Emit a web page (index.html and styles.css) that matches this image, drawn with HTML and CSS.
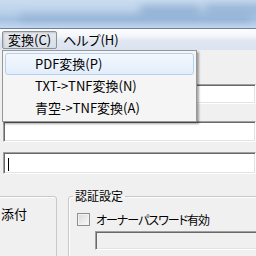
FILE: index.html
```html
<!DOCTYPE html>
<html lang="ja">
<head>
  <meta charset="UTF-8">
  <title>TNF変換</title>
  <link rel="stylesheet" href="styles.css">
</head>
<body>
  <div class="titlebar">
    <div class="blur b1"></div>
    <div class="blur b2"></div>
    <div class="blur b3"></div>
  </div>

  <div class="menubar">
    <span class="menu-item open">変換(C)</span>
    <span class="menu-item">ヘルプ(H)</span>
  </div>

  <div class="dropdown">
    <div class="drop-item active">PDF変換(P)</div>
    <div class="drop-item">TXT-&gt;TNF変換(N)</div>
    <div class="drop-item">青空-&gt;TNF変換(A)</div>
  </div>

  <div class="content">
    <div class="textbox tb1"></div>
    <div class="textbox tb2"></div>
    <div class="textbox tb3"><span class="caret"></span></div>

    <div class="groups">
      <fieldset class="group attach">
        <div class="attach-label">添付</div>
      </fieldset>
      <fieldset class="group auth">
        <legend>認証設定</legend>
        <div class="check-row">
          <span class="checkbox"></span>
          <span class="check-label">オーナーパスワード有効</span>
        </div>
        <div class="textbox disabled"></div>
      </fieldset>
    </div>
  </div>
</body>
</html>
```

FILE: styles.css
```css
body {
  margin: 0;
  width: 256px;
  height: 256px;
  overflow: hidden;
  position: relative;
  background: #f0f0f0;
  font-family: "Noto Sans CJK JP", sans-serif;
  font-feature-settings: "palt";
  font-size: 12px;
  color: #000;
}

.titlebar {
  height: 28px;
  border-bottom: 1px solid #6f8198;
  background: linear-gradient(#cadcef 0%, #bed4eb 35%, #a6c2e1 70%, #c4d8ee 100%);
  position: relative;
  overflow: hidden;
}
.blur {
  position: absolute;
  background: #6f94c2;
  filter: blur(4px);
  opacity: 0.6;
}
.b1 { left: 140px; top: 6px; width: 60px; height: 8px; }
.b2 { left: 205px; top: 4px; width: 60px; height: 10px; opacity: 0.5; }
.b3 { left: 20px; top: 14px; width: 230px; height: 8px; opacity: 0.35; }

.menubar {
  height: 21px;
  display: flex;
  align-items: center;
  padding-left: 2px;
  font-size: 13px;
  background: linear-gradient(#fcfdfe 0%, #f2f5fa 35%, #e1e7f2 55%, #dbe3f1 100%);
}
.menu-item {
  height: 16px;
  line-height: 16px;
  padding: 0 5px;
  border: 1px solid transparent;
  border-radius: 2px;
}
.menu-item.open {
  border-color: #8d9199;
  background: linear-gradient(#e6eaf0, #d8dee7);
  box-shadow: inset 1px 1px 2px rgba(0, 0, 0, 0.15);
}

.dropdown {
  position: absolute;
  left: 2px;
  top: 50px;
  width: 189px;
  padding: 2px;
  border: 1px solid #979797;
  background: #f5f5f5;
  font-size: 13px;
  box-shadow: 2px 2px 2px rgba(0, 0, 0, 0.35);
}
.drop-item {
  height: 20px;
  line-height: 20px;
  padding-left: 29px;
  border: 1px solid transparent;
  border-radius: 3px;
}
.drop-item.active {
  border-color: #b4d0f0;
  background: linear-gradient(#f3f8fe, #e3eefb);
}

.content {
  padding-left: 3px;
}
.textbox {
  box-sizing: border-box;
  background: #fff;
  border: 1px solid;
  border-color: #a0a0a0 #fff #fff #a0a0a0;
  box-shadow: inset 1px 1px #696969, inset -1px -1px #e3e3e3;
}
.tb1 { margin-top: 34px; height: 20px; }
.tb2 { margin-top: 17px; height: 21px; }
.tb3 {
  margin-top: 10px;
  height: 22px;
  padding: 5px 0 0 4px;
}
.caret {
  display: block;
  width: 1px;
  height: 13px;
  background: #000;
}

.groups {
  display: flex;
  align-items: flex-start;
  margin-top: 14px;
  margin-left: -3px;
}
.group {
  margin: 0;
  min-width: 0;
  flex-shrink: 0;
  border: 1px solid #c8c8c8;
  border-radius: 3px;
  box-shadow: inset 1px 1px #fff;
  height: 80px;
}
.attach {
  box-sizing: border-box;
  margin-top: 8px;
  margin-left: -40px;
  width: 97px;
  padding: 9px 0 0 40px;
  font-size: 13px;
}
.attach-label {
  line-height: 16px;
  white-space: nowrap;
}
.auth {
  margin-left: 11px;
  width: 220px;
  padding: 0 0 0 8px;
}
.auth legend {
  margin-left: -4px;
  padding: 0 2px;
  line-height: 16px;
}
.check-row {
  display: flex;
  align-items: center;
  gap: 6px;
  margin-top: 9px;
  height: 13px;
  line-height: 16px;
}
.check-label {
  letter-spacing: -1px;
}
.checkbox {
  box-sizing: border-box;
  width: 13px;
  height: 13px;
  border: 1px solid #8e8f8f;
  background: linear-gradient(135deg, #d8d8d8, #fbfbfb);
  box-shadow: inset 0 0 0 1px #f2f2f2;
}
.textbox.disabled {
  margin: 5px 0 0 18px;
  height: 19px;
  background: #f0f0f0;
}
```
